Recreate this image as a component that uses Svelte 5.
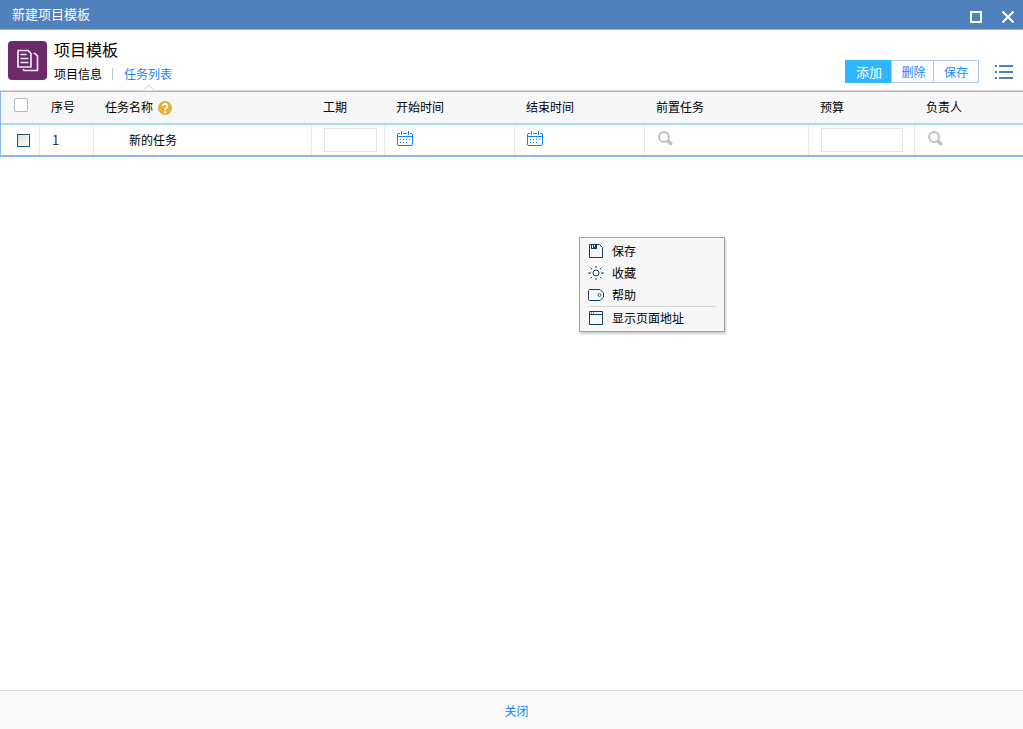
<script>
  const columns = [
    { key: 'check', width: 38 },
    { key: 'no', label: '序号', width: 54 },
    { key: 'name', label: '任务名称', width: 218, help: true },
    { key: 'days', label: '工期', width: 73 },
    { key: 'start', label: '开始时间', width: 130 },
    { key: 'end', label: '结束时间', width: 130 },
    { key: 'prev', label: '前置任务', width: 164 },
    { key: 'budget', label: '预算', width: 106 },
    { key: 'owner', label: '负责人' }
  ];
  const tasks = [{ no: 1, name: '新的任务' }];
</script>

{#snippet calendar()}
  <svg width="16" height="15" viewBox="0 0 16 15" shape-rendering="crispEdges" aria-hidden="true">
    <path d="M1 2h2v1H1zM6 2h4v1H6zM13 2h2v1h-2zM0 3h1v11H0zM15 3h1v11h-1zM1 5h14v1H1zM1 14h14v1H1zM4 0h1v4H4zM11 0h1v4h-1z" />
    <path d="M3 8h1v1H3zM6 8h1v1H6zM9 8h1v1H9zM12 8h1v1h-1zM3 11h1v1H3zM6 11h1v1H6zM9 11h1v1H9z" />
  </svg>
{/snippet}

{#snippet search()}
  <svg width="16" height="15" viewBox="-1 0 16 15" fill="none" stroke="#bfbfbf" aria-hidden="true">
    <circle cx="6" cy="6" r="4.9" stroke-width="2" />
    <path d="M9.5 9.5l1 1" stroke-width="2" />
    <path d="M10.8 10.8l1.8 1.8" stroke-width="3.6" stroke-linecap="round" />
  </svg>
{/snippet}

<div class="dialog">
  <header class="titlebar">
    <span>新建项目模板</span>
    <div class="window-actions">
      <button type="button" aria-label="最大化">
        <svg width="12" height="12" viewBox="0 0 12 12"><rect x="1" y="1" width="10" height="10" fill="none" stroke="#fff" stroke-width="2" /></svg>
      </button>
      <button type="button" aria-label="关闭窗口">
        <svg width="12" height="12" viewBox="0 0 12 12"><path d="M.5.5l11 11M11.5.5l-11 11" stroke="#fff" stroke-width="2" /></svg>
      </button>
    </div>
  </header>

  <section class="head">
    <div class="logo">
      <svg width="22" height="23" viewBox="0 0 22 23" fill="none" stroke="#f1e6f1" stroke-width="1.7" stroke-linejoin="round" aria-hidden="true">
        <path d="M1 1.500h10l3 3v13.500h-13z" />
        <path d="M3.500 5.500h6M3.500 9.500h8M3.500 13.500h8" />
        <path d="M16.500 4.500h1.500l2.500 2.500v14.500H7l-1-1.500" />
      </svg>
    </div>
    <div class="heading">
      <h1>项目模板</h1>
      <nav>
        <a class="tab" href="#info">项目信息</a>
        <i class="bar"></i>
        <a class="tab active" href="#tasks">任务列表</a>
      </nav>
    </div>
    <div class="toolbar">
      <button type="button" class="primary">添加</button>
      <button type="button">删除</button>
      <button type="button">保存</button>
    </div>
    <button type="button" class="more" aria-label="更多">
      <svg width="18" height="14" viewBox="0 0 18 14" fill="#4f81bd" shape-rendering="crispEdges"><path d="M0 0h2v2H0zM4 0h14v2H4zM0 6h2v2H0zM4 6h14v2H4zM0 12h2v2H0zM4 12h14v2H4z" /></svg>
    </button>
  </section>

  <main>
    <table>
      <colgroup>
        {#each columns as c (c.key)}
          <col style:width={c.width ? `${c.width}px` : null} />
        {/each}
      </colgroup>
      <thead>
        <tr>
          {#each columns as c (c.key)}
            <th>
              {#if c.label}
                <span class="label">{c.label}{#if c.help}<svg width="14" height="16" viewBox="0 -2 14 16" aria-hidden="true"><circle cx="7" cy="7" r="7" fill="#e5b13d" /><path d="M4.700 5.200a2.300 2.300 0 1 1 3.700 1.800Q7 7.900 7 9" fill="none" stroke="#fff" stroke-width="1.800" /><rect x="6" y="10" width="2" height="2" fill="#fff" /></svg>{/if}</span>
              {:else}
                <input class="check all" type="checkbox" aria-label="全选" />
              {/if}
            </th>
          {/each}
        </tr>
      </thead>
      <tbody>
        {#each tasks as t (t.no)}
          <tr>
            <td><input class="check" type="checkbox" aria-label="选择" /></td>
            <td class="no">{t.no}</td>
            <td class="name">{t.name}</td>
            <td><input class="field" type="text" aria-label="工期" /></td>
            <td><button type="button" class="pick" aria-label="开始时间">{@render calendar()}</button></td>
            <td><button type="button" class="pick" aria-label="结束时间">{@render calendar()}</button></td>
            <td><button type="button" class="pick" aria-label="前置任务">{@render search()}</button></td>
            <td><input class="field" type="text" aria-label="预算" /></td>
            <td><button type="button" class="pick" aria-label="负责人">{@render search()}</button></td>
          </tr>
        {/each}
      </tbody>
    </table>
  </main>

  <footer><button type="button">关闭</button></footer>

  <div class="menu">
    <button type="button">
      <svg width="16" height="16" viewBox="0 0 16 16" fill="none" stroke="#0f3d70" aria-hidden="true"><path d="M1.500 1.500h10l3 3v10h-13z" /><path d="M3 1h6v5H3z" fill="#0f3d70" stroke="none" /><path d="M4 2h1v3H4zM6 2h1v2H6z" fill="#f7f7f7" stroke="none" /></svg>
      保存
    </button>
    <button type="button">
      <svg width="16" height="16" viewBox="0 0 16 16" fill="none" stroke="#0f3d70" aria-hidden="true"><circle cx="8" cy="8" r="3" /><path d="M8 1v2M8 13v2M0 8h3M13 8h3M2.500 2.500l1.500 1.500M12 12l1.500 1.500M2.500 13.500l1.500-1.500M12 4l1.500-1.500" /></svg>
      收藏
    </button>
    <button type="button">
      <svg width="16" height="16" viewBox="0 0 16 16" fill="none" stroke="#0f3d70" aria-hidden="true"><path d="M1.500 2.500h10.500l3.500 3.500v4l-3.500 3.500H1.500l-1-1v-9z" /><circle cx="11.500" cy="8" r="1.500" stroke="#3c6590" /></svg>
      帮助
    </button>
    <hr />
    <button type="button">
      <svg width="16" height="16" viewBox="0 0 16 16" fill="none" stroke="#0f3d70" aria-hidden="true"><path d="M1.500 1.500h13v13h-13zM1 4.500h14" /><path d="M3 3h1M5 3h1" /></svg>
      显示页面地址
    </button>
  </div>
</div>

<style>
  :global(body) {
    margin: 0;
  }
  .dialog {
    position: relative;
    display: flex;
    flex-direction: column;
    min-height: 100vh;
    background: #fff;
    color: #000;
    font: 12px/16px "Noto Sans CJK SC", sans-serif;
  }
  .dialog * {
    box-sizing: border-box;
  }
  button {
    display: inline-flex;
    align-items: center;
    padding: 0;
    border: 0;
    background: none;
    color: inherit;
    font: inherit;
    cursor: pointer;
  }
  svg {
    flex: none;
  }
  a {
    color: inherit;
    text-decoration: none;
  }
  .titlebar {
    display: flex;
    justify-content: space-between;
    height: 30px;
    padding: 0 9px 0 12px;
    border-bottom: 1px solid #b3b3b3;
    background: #4f81bd;
    color: #fff;
    font-size: 13px;
    line-height: 28px;
  }
  .window-actions {
    display: flex;
    gap: 20px;
    padding-top: 4px;
  }
  .head {
    display: flex;
    height: 61px;
    padding: 0 10px 0 8px;
    border-bottom: 1px solid #d9d9d9;
  }
  .logo {
    display: grid;
    place-items: center;
    width: 39px;
    height: 39px;
    margin: 11px 7px 0 0;
    border-radius: 4px;
    background: #6d2a6b;
  }
  .heading {
    flex: 1;
    padding-top: 7px;
  }
  h1 {
    margin: 0;
    font-size: 16px;
    font-weight: 400;
    line-height: 24px;
  }
  nav {
    display: flex;
    align-items: center;
    padding-top: 5px;
  }
  .bar {
    width: 1px;
    height: 12px;
    margin: 0 11px 0 10px;
    background: #b8c4d4;
  }
  .tab {
    position: relative;
  }
  .active {
    color: #1688ff;
  }
  .active::after {
    content: '';
    position: absolute;
    top: 20px;
    left: 50%;
    width: 8px;
    height: 8px;
    margin-left: -4px;
    border: solid #ccc;
    border-width: 1px 0 0 1px;
    background: #fff;
    transform: rotate(45deg);
    clip-path: polygon(0 0, 100% 0, 0 100%);
  }
  .toolbar {
    display: flex;
    height: 23px;
    margin: 30px 16px 0 0;
  }
  .toolbar button {
    justify-content: center;
    width: 45px;
    border: 1px solid #a9cbf0;
    border-left: 0;
    color: #1688ff;
  }
  .toolbar button:nth-child(2) {
    width: 42px;
    padding-left: 2px;
  }
  .toolbar .primary {
    width: 47px;
    padding-left: 2px;
    border-color: #30b5ff;
    border-right-color: #a9cbf0;
    background: #30b5ff;
    color: #fff;
    font-size: 13px;
  }
  .more {
    height: 14px;
    margin-top: 35px;
  }
  main {
    flex: 1;
  }
  table {
    width: 100%;
    table-layout: fixed;
    border-collapse: separate;
    border-spacing: 0;
    border: solid #8db4f5;
    border-width: 1px 0 2px 1px;
  }
  th,
  td {
    padding: 0 0 0 12px;
    text-align: left;
    font-weight: 400;
    white-space: nowrap;
  }
  th {
    height: 33px;
    padding-bottom: 1px;
    border-bottom: 2px solid #a3dcff;
    background: #f7f7f7;
  }
  td {
    height: 30px;
    border-left: 1px solid #e8e8e8;
  }
  td:first-child {
    padding-left: 16px;
    border-left: 0;
  }
  th:first-child {
    padding-left: 13px;
  }
  .label {
    display: flex;
    align-items: center;
    gap: 5px;
  }
  .name {
    padding-left: 35px;
  }
  .no {
    color: #333;
    font-size: 13px;
  }
  .check {
    appearance: none;
    display: block;
    width: 13px;
    height: 13px;
    margin: 0;
    border: 1px solid #1c5180;
    background: linear-gradient(135deg, #dcdcd7, #fff);
  }
  .all {
    width: 14px;
    height: 14px;
    margin-bottom: 4px;
    border-color: #b8b8b8;
    border-radius: 2px;
    background: #fff;
  }
  .field {
    display: block;
    width: 88%;
    height: 24px;
    border: 1px solid #e6e6df;
    background: #fff;
  }
  .pick {
    display: flex;
    padding-bottom: 4px;
    fill: #0d84ff;
  }
  footer {
    display: flex;
    justify-content: center;
    height: 39px;
    padding: 0 0 0 10px;
    border-top: 1px solid #d9d9d9;
    background: #fafafa;
    color: #0d84ff;
  }
  footer button {
    padding-top: 2px;
  }
  .menu {
    position: absolute;
    top: 237px;
    left: 579px;
    display: flex;
    flex-direction: column;
    width: 146px;
    padding: 2px 8px;
    border: 1px solid #a3a3a3;
    background: #f7f7f7;
    box-shadow: 1px 2px 2px rgba(0, 0, 0, 0.2);
  }
  .menu button {
    gap: 8px;
    height: 22px;
  }
  .menu hr {
    width: 100%;
    height: 1px;
    margin: 0;
    border: 0;
    background: #d4d4d4;
  }
</style>
